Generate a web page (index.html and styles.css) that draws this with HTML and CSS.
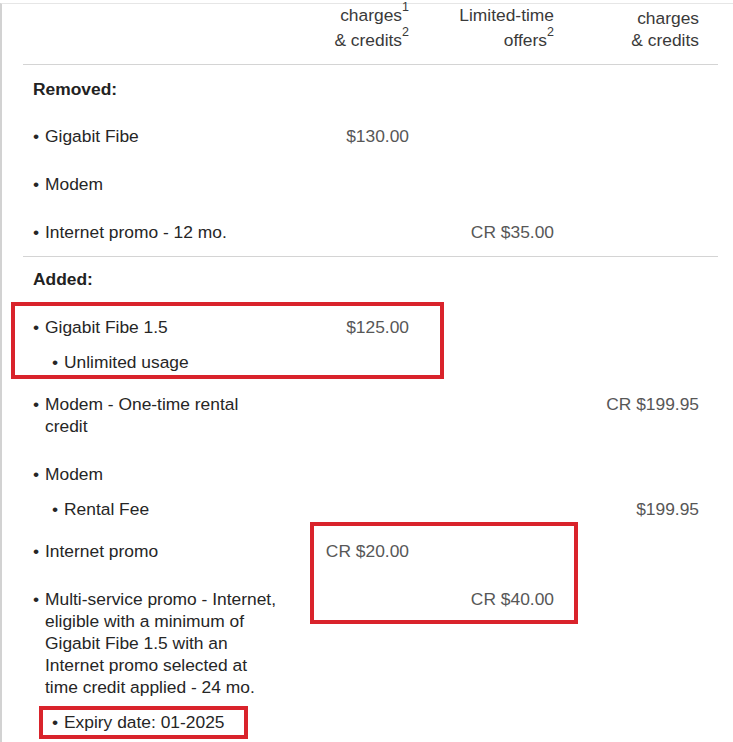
FILE: index.html
```html
<!DOCTYPE html>
<html lang="en">
<head>
<meta charset="utf-8">
<title>Charges</title>
<link rel="stylesheet" href="styles.css">
</head>
<body>
<div class="page">
  <div class="table">
    <div class="row head">
      <div class="cell"></div>
      <div class="cell num">charges<sup>1</sup><br>&amp; credits<sup>2</sup></div>
      <div class="cell num">Limited-time<br>offers<sup>2</sup></div>
      <div class="cell num">charges<br>&amp; credits</div>
    </div>

    <div class="section">
      <div class="row heading"><div class="cell">Removed:</div></div>
      <div class="row item">
        <div class="cell label"><span class="bullet">•</span><span>Gigabit Fibe</span></div>
        <div class="cell num">$130.00</div><div class="cell num"></div><div class="cell num"></div>
      </div>
      <div class="row item">
        <div class="cell label"><span class="bullet">•</span><span>Modem</span></div>
        <div class="cell num"></div><div class="cell num"></div><div class="cell num"></div>
      </div>
      <div class="row item">
        <div class="cell label"><span class="bullet">•</span><span>Internet promo - 12 mo.</span></div>
        <div class="cell num"></div><div class="cell num">CR $35.00</div><div class="cell num"></div>
      </div>
    </div>

    <div class="section divided">
      <div class="row heading"><div class="cell">Added:</div></div>
      <div class="row item">
        <div class="cell label"><span class="bullet">•</span><span>Gigabit Fibe 1.5</span></div>
        <div class="cell num">$125.00</div><div class="cell num"></div><div class="cell num"></div>
      </div>
      <div class="row sub">
        <div class="cell label"><span class="bullet">•</span><span>Unlimited usage</span></div>
        <div class="cell num"></div><div class="cell num"></div><div class="cell num"></div>
      </div>
      <div class="row item">
        <div class="cell label"><span class="bullet">•</span><span>Modem - One-time rental credit</span></div>
        <div class="cell num"></div><div class="cell num"></div><div class="cell num">CR $199.95</div>
      </div>
      <div class="row item">
        <div class="cell label"><span class="bullet">•</span><span>Modem</span></div>
        <div class="cell num"></div><div class="cell num"></div><div class="cell num"></div>
      </div>
      <div class="row sub">
        <div class="cell label"><span class="bullet">•</span><span>Rental Fee</span></div>
        <div class="cell num"></div><div class="cell num"></div><div class="cell num">$199.95</div>
      </div>
      <div class="row item">
        <div class="cell label"><span class="bullet">•</span><span>Internet promo</span></div>
        <div class="cell num">CR $20.00</div><div class="cell num"></div><div class="cell num"></div>
      </div>
      <div class="row item">
        <div class="cell label"><span class="bullet">•</span><span>Multi-service promo - Internet, eligible with a minimum of Gigabit Fibe 1.5 with an Internet promo selected at time credit applied - 24 mo.</span></div>
        <div class="cell num"></div><div class="cell num">CR $40.00</div><div class="cell num"></div>
      </div>
      <div class="row sub">
        <div class="cell label"><span class="bullet">•</span><span>Expiry date: 01-2025</span></div>
        <div class="cell num"></div><div class="cell num"></div><div class="cell num"></div>
      </div>
    </div>
  </div>

  <div class="mark mark-1"></div>
  <div class="mark mark-2"></div>
  <div class="mark mark-3"></div>
</div>
</body>
</html>
```

FILE: styles.css
```css
html, body {
  margin: 0;
  padding: 0;
  background: #ffffff;
}

body {
  font-family: "Liberation Sans", Arial, sans-serif;
  font-size: 17.4px;
  line-height: 22px;
  color: #262626;
  overflow: hidden;
}

.page {
  position: relative;
  margin-top: 3px;
  height: 739px;
  border-top: 1px solid #e6e6e6;
  border-left: 2px solid #d2d2d2;
  box-sizing: border-box;
}

.table {
  margin-left: 21px;
  width: 695px;
}

.row {
  display: grid;
  grid-template-columns: 257px 129px 145px 145px;
  padding-right: 19px;
  align-items: start;
}

.num {
  text-align: right;
  color: #575757;
}

.head {
  height: 61px;
  box-sizing: border-box;
  align-items: end;
  align-content: end;
  padding-bottom: 13px;
  border-bottom: 1px solid #d4d4d4;
}

.head .num {
  color: #3a3a3a;
}

.head sup {
  font-size: 0.72em;
  line-height: 1;
  vertical-align: 0.78em;
}

.divided {
  border-top: 1px solid #d4d4d4;
}

.heading {
  padding: 13px 0 12px;
  font-weight: bold;
  color: #222222;
}

.divided .heading {
  padding: 11px 0 13px;
}

.heading .cell {
  padding-left: 10px;
}

.item {
  padding: 13px 19px 13px 0;
}

.sub {
  padding: 0 19px 7px 0;
}

.label {
  display: flex;
  padding-left: 10px;
}

.sub .label {
  padding-left: 29px;
}

.bullet {
  flex: 0 0 12px;
}

.mark {
  position: absolute;
  border: 4px solid #d9232b;
  box-sizing: border-box;
}

.mark-1 {
  left: 9px;
  top: 298px;
  width: 433px;
  height: 77px;
}

.mark-2 {
  left: 308px;
  top: 518px;
  width: 268px;
  height: 102px;
}

.mark-3 {
  left: 37px;
  top: 702px;
  width: 209px;
  height: 33px;
}
```
